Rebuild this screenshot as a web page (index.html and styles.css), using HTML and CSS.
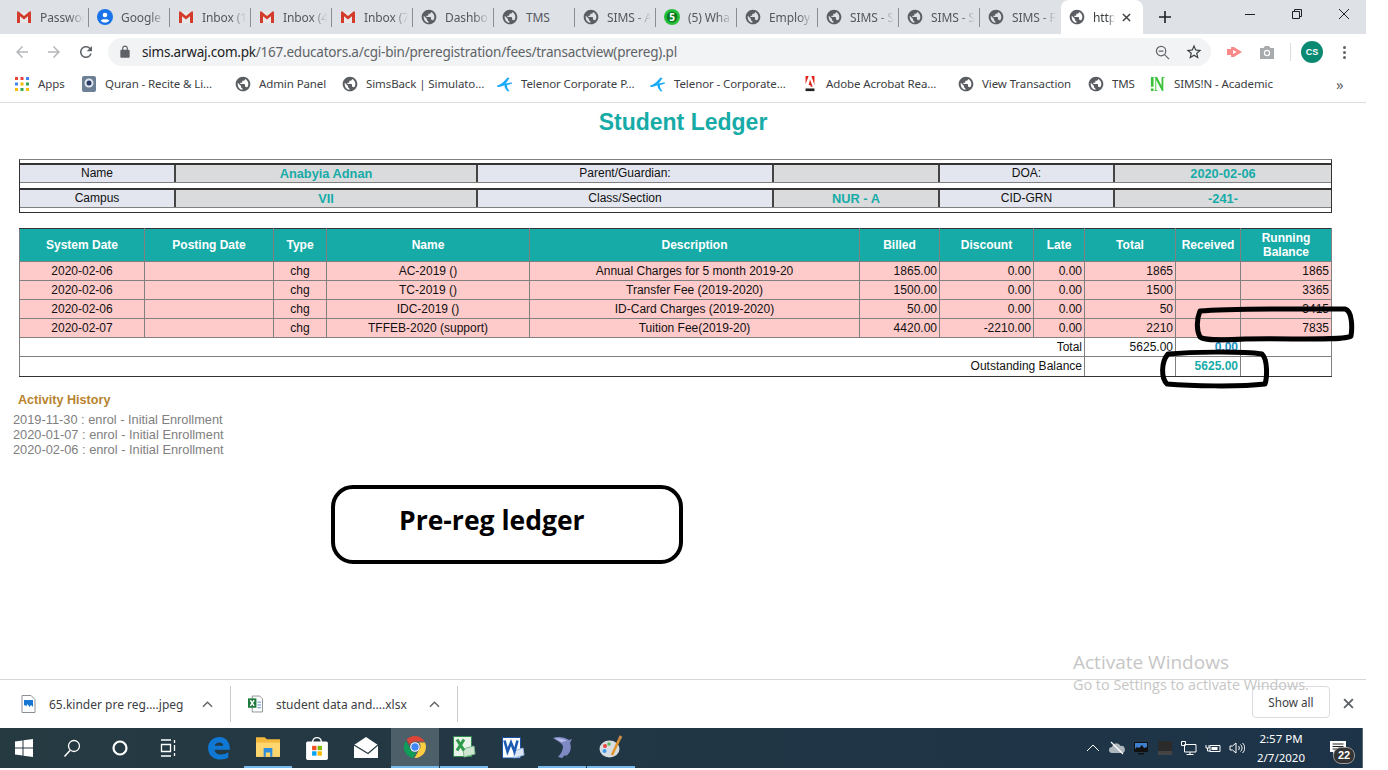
FILE: index.html
```html
<!DOCTYPE html>
<html lang="en">
<head>
    <meta charset="UTF-8">
    <title>Student Ledger</title>
    <link rel="stylesheet" href="styles.css">
</head>
<body>

<svg class="defs" width="0" height="0">
    <symbol id="globe" viewBox="0 0 24 24"><path fill="#5a5e63" d="M12 1C5.900 1 1 5.900 1 12s4.900 11 11 11 11-4.900 11-11S18.100 1 12 1zm-1 19.900c-4-.5-7-3.900-7-8.900 0-.6.1-1.200.2-1.800L9 15v1c0 1.100.9 2 2 2v2.900zm6.900-3.500c-.3-.8-1-1.400-1.900-1.400h-1v-3c0-.6-.4-1-1-1H8v-2h2c.6 0 1-.4 1-1V7h2c1.100 0 2-.9 2-2v-.4c2.900 1.200 5 4 5 7.400 0 2.100-.8 4-2.100 5.400z"/></symbol>
    <symbol id="gmail" viewBox="0 0 16 16"><path fill="#e8e8e8" d="M2 3h12v11H2z"/><path fill="#d33b2c" d="M1 2.500h1.500L8 7l5.500-4.500H15V14h-3V7.200L8 10.400 4 7.200V14H1z"/></symbol>
    <symbol id="telenor" viewBox="0 0 16 16"><path fill="#19aaf8" d="M0 9.500C3 9 7 6 10.500 1.500l2 .5C10.500 5 9.500 6.500 8.500 7.500c2-.2 4-.4 6-1.200l.5 1.200c-2 .8-3.500 1.200-5 1.400-.2 2 .5 4 2.500 6L11 15.500C8.500 13.500 7.500 11.500 7.500 9.200 5 10.200 2.500 11 .5 11z"/></symbol>
</svg>

<div class="screen">

    <div class="tabstrip">
        <div class="tab"><svg class="ico"><use href="#gmail"/></svg><span class="tab-text">Passwor</span></div>
        <div class="tab"><svg class="ico" viewBox="0 0 16 16"><circle cx="8" cy="8" r="8" fill="#1a73e8"/><circle cx="8" cy="6" r="2.300" fill="#fff"/><path fill="#fff" d="M3.800 11.500c1-1.700 7.400-1.700 8.400 0-1 1.400-2.400 2-4.200 2s-3.200-.6-4.200-2z"/></svg><span class="tab-text">Google</span></div>
        <div class="tab"><svg class="ico"><use href="#gmail"/></svg><span class="tab-text">Inbox (1</span></div>
        <div class="tab"><svg class="ico"><use href="#gmail"/></svg><span class="tab-text">Inbox (4</span></div>
        <div class="tab"><svg class="ico"><use href="#gmail"/></svg><span class="tab-text">Inbox (7</span></div>
        <div class="tab"><svg class="ico"><use href="#globe"/></svg><span class="tab-text">Dashbo</span></div>
        <div class="tab"><svg class="ico"><use href="#globe"/></svg><span class="tab-text tab-plain">TMS</span></div>
        <div class="tab"><svg class="ico"><use href="#globe"/></svg><span class="tab-text">SIMS - A</span></div>
        <div class="tab"><svg class="ico" viewBox="0 0 16 16"><circle cx="8" cy="8" r="8" fill="#25c03a"/><circle cx="8" cy="8" r="5.500" fill="#0d7a24"/><text x="8" y="11.500" class="wa-num">5</text></svg><span class="tab-text">(5) Wha</span></div>
        <div class="tab"><svg class="ico"><use href="#globe"/></svg><span class="tab-text">Employ</span></div>
        <div class="tab"><svg class="ico"><use href="#globe"/></svg><span class="tab-text">SIMS - S</span></div>
        <div class="tab"><svg class="ico"><use href="#globe"/></svg><span class="tab-text">SIMS - S</span></div>
        <div class="tab tab-last"><svg class="ico"><use href="#globe"/></svg><span class="tab-text">SIMS - F</span></div>
        <div class="tab tab-active">
            <svg class="ico"><use href="#globe"/></svg><span class="tab-text">http</span>
            <svg class="tab-close" viewBox="0 0 10 10"><path d="M1 1l8 8M9 1l-8 8"/></svg>
        </div>
        <svg class="new-tab" viewBox="0 0 12 12"><path d="M6 0v12M0 6h12"/></svg>
        <div class="win-controls">
            <svg viewBox="0 0 12 12"><path d="M1 6.500h10"/></svg>
            <svg viewBox="0 0 12 12"><path d="M1.500 3.500h7v7h-7zM3.500 3.500v-2h7v7h-2"/></svg>
            <svg viewBox="0 0 12 12"><path d="M1 1l10 10M11 1L1 11"/></svg>
        </div>
    </div>

    <div class="toolbar">
        <svg class="nav-ico nav-off" viewBox="0 0 24 24"><path d="M20 11H7.800l5.600-5.600L12 4l-8 8 8 8 1.400-1.400L7.800 13H20z"/></svg>
        <svg class="nav-ico nav-off" viewBox="0 0 24 24"><path d="M4 11h12.200l-5.600-5.600L12 4l8 8-8 8-1.400-1.400 5.600-5.600H4z"/></svg>
        <svg class="nav-ico" viewBox="0 0 24 24"><path d="M17.650 6.350C16.200 4.900 14.210 4 12 4c-4.420 0-7.990 3.580-7.990 8s3.570 8 7.990 8c3.730 0 6.840-2.550 7.730-6h-2.080c-.82 2.330-3.040 4-5.650 4-3.310 0-6-2.690-6-6s2.690-6 6-6c1.660 0 3.140.69 4.220 1.780L13 11h7V4z"/></svg>
        <div class="omnibox">
            <svg class="lock" viewBox="0 0 24 24"><path d="M18 8h-1V6c0-2.760-2.240-5-5-5S7 3.240 7 6v2H6c-1.100 0-2 .9-2 2v10c0 1.100.9 2 2 2h12c1.100 0 2-.9 2-2V10c0-1.100-.9-2-2-2zM9 6c0-1.660 1.340-3 3-3s3 1.340 3 3v2H9z"/></svg>
            <span class="url"><b>sims.arwaj.com.pk</b>/167.educators.a/cgi-bin/preregistration/fees/transactview(prereg).pl</span>
            <svg class="omni-ico" viewBox="0 0 16 16"><circle cx="6.500" cy="6.500" r="5"/><path d="M10.200 10.200L15 15M4 6.500h5"/></svg>
            <svg class="omni-star" viewBox="0 0 24 24"><path d="M22 9.240l-7.190-.62L12 2 9.190 8.630 2 9.240l5.460 4.730L5.820 21 12 17.270 18.180 21l-1.630-7.030L22 9.240zM12 15.400l-3.760 2.270 1-4.280-3.320-2.880 4.380-.38L12 6.100l1.710 4.040 4.380.38-3.320 2.880 1 4.280L12 15.400z"/></svg>
        </div>
        <svg class="ext-ico" viewBox="0 0 16 16"><path fill="#f98a8a" d="M0 5h4V3h3l8 5-8 5H4v-2H0z"/><path fill="#fff" d="M6 6v4l3.500-2z"/></svg>
        <svg class="ext-ico" viewBox="0 0 16 16"><path fill="#a8abae" d="M1 4h3.500L6 2h4l1.500 2H15v11H1z"/><circle cx="8" cy="9" r="3.200" fill="#fff"/><circle cx="8" cy="9" r="2" fill="#a8abae"/></svg>
        <span class="tool-sep"></span>
        <span class="avatar">CS</span>
        <span class="kebab"><i></i><i></i><i></i></span>
    </div>

    <div class="bookmarks">
        <div class="bm">
            <svg class="apps" viewBox="0 0 14 14">
                <path fill="#ea4335" d="M0 0h3v3H0zM5.500 0h3v3h-3z"/><path fill="#4285f4" d="M11 0h3v3h-3zM0 5.500h3v3H0z"/>
                <path fill="#fbbc05" d="M5.500 5.500h3v3h-3zM0 11h3v3H0z"/><path fill="#34a853" d="M11 5.500h3v3h-3zM5.500 11h3v3h-3z"/><path fill="#fbbc05" d="M11 11h3v3h-3z"/>
            </svg>Apps
        </div>
        <div class="bm"><svg class="ico" viewBox="0 0 16 16"><rect x="1" y="0" width="14" height="16" rx="2" fill="#6d7f95"/><circle cx="8" cy="7" r="4.500" fill="#dfe6ee"/><circle cx="8" cy="7" r="2.500" fill="#2a3b68"/></svg>Quran - Recite &amp; Li...</div>
        <div class="bm"><svg class="ico"><use href="#globe"/></svg>Admin Panel</div>
        <div class="bm"><svg class="ico"><use href="#globe"/></svg>SimsBack | Simulato...</div>
        <div class="bm"><svg class="ico"><use href="#telenor"/></svg>Telenor Corporate P...</div>
        <div class="bm"><svg class="ico"><use href="#telenor"/></svg>Telenor - Corporate...</div>
        <div class="bm"><svg class="ico" viewBox="0 0 16 18"><path fill="#e2231a" d="M3 0h3.500L3 9H3zM9.500 0H13v10zM8 4l3 8H9l-1-2H6.500z"/><path fill="#222" d="M3 14h10v3H3z"/></svg>Adobe Acrobat Rea...</div>
        <div class="bm"><svg class="ico"><use href="#globe"/></svg>View Transaction</div>
        <div class="bm"><svg class="ico"><use href="#globe"/></svg>TMS</div>
        <div class="bm"><svg class="ico" viewBox="0 0 16 18"><path fill="#3cc13b" d="M0 1h3v11H0zM0 14h3v3H0zM4 1h3l5 10V1h3.500v1H14v15h-1.500L6 4.500V16h1.500v1H4v-1h1V2H4z"/></svg>SIMS!N - Academic</div>
        <div class="bm-more">&raquo;</div>
    </div>

    <div class="page">
        <h1 class="title">Student Ledger</h1>

        <div class="info">
            <div class="info-row">
                <div class="lbl">Name</div><div class="val">Anabyia Adnan</div>
                <div class="lbl">Parent/Guardian:</div><div class="val"></div>
                <div class="lbl">DOA:</div><div class="val">2020-02-06</div>
            </div>
            <div class="info-row">
                <div class="lbl">Campus</div><div class="val">VII</div>
                <div class="lbl">Class/Section</div><div class="val">NUR - A</div>
                <div class="lbl">CID-GRN</div><div class="val">-241-</div>
            </div>
        </div>

        <table class="ledger">
            <colgroup>
                <col class="w125"><col class="w129"><col class="w53"><col class="w203"><col class="w330"><col class="w80">
                <col class="w94"><col class="w51"><col class="w91"><col class="w65"><col class="w91">
            </colgroup>
            <tr>
                <th>System Date</th><th>Posting Date</th><th>Type</th><th>Name</th><th>Description</th><th>Billed</th>
                <th>Discount</th><th>Late</th><th>Total</th><th>Received</th><th>Running<br>Balance</th>
            </tr>
            <tr class="chg">
                <td>2020-02-06</td><td></td><td>chg</td><td>AC-2019 ()</td><td>Annual Charges for 5 month 2019-20</td>
                <td class="num">1865.00</td><td class="num">0.00</td><td class="num">0.00</td><td class="num">1865</td><td></td><td class="num">1865</td>
            </tr>
            <tr class="chg">
                <td>2020-02-06</td><td></td><td>chg</td><td>TC-2019 ()</td><td>Transfer Fee (2019-2020)</td>
                <td class="num">1500.00</td><td class="num">0.00</td><td class="num">0.00</td><td class="num">1500</td><td></td><td class="num">3365</td>
            </tr>
            <tr class="chg">
                <td>2020-02-06</td><td></td><td>chg</td><td>IDC-2019 ()</td><td>ID-Card Charges (2019-2020)</td>
                <td class="num">50.00</td><td class="num">0.00</td><td class="num">0.00</td><td class="num">50</td><td></td><td class="num">3415</td>
            </tr>
            <tr class="chg">
                <td>2020-02-07</td><td></td><td>chg</td><td>TFFEB-2020 (support)</td><td>Tuition Fee(2019-20)</td>
                <td class="num">4420.00</td><td class="num">-2210.00</td><td class="num">0.00</td><td class="num">2210</td><td></td><td class="num">7835</td>
            </tr>
            <tr>
                <td class="num" colspan="8">Total</td><td class="num">5625.00</td><td class="num paid">0.00</td><td></td>
            </tr>
            <tr>
                <td class="num" colspan="8">Outstanding Balance</td><td></td><td class="num owed">5625.00</td><td></td>
            </tr>
        </table>

        <h3 class="activity-head">Activity History</h3>
        <div class="activity">
            <div>2019-11-30 : enrol - Initial Enrollment</div>
            <div>2020-01-07 : enrol - Initial Enrollment</div>
            <div>2020-02-06 : enrol - Initial Enrollment</div>
        </div>

        <div class="note">Pre-reg ledger</div>
        <svg class="marks" viewBox="0 0 1366 576">
            <path d="M1200 208C1230 205 1300 206 1345 206C1353 208 1352 227 1351 233C1345 238 1290 235 1245 236C1225 237 1205 238 1200 234C1196 227 1197 215 1200 208Z"/>
            <path d="M1168 251C1190 249 1240 248 1262 251C1268 257 1267 275 1265 281C1240 284 1190 283 1167 281C1161 275 1161 259 1168 251Z"/>
        </svg>
    </div>

    <div class="downloads">
        <div class="dl">
            <svg class="dl-ico" viewBox="0 0 14 18"><path fill="#fff" stroke="#8a8f96" d="M.5.500h9l4 4v13H.5z"/><path fill="#1577d2" d="M2.500 5h9v7l-2-2-1.500 2-2-3-1 2-2.500-1z"/></svg>
            <span class="dl-name">65.kinder pre reg....jpeg</span>
            <svg class="chev" viewBox="0 0 12 8"><path d="M1 7l5-5 5 5"/></svg>
        </div>
        <div class="dl">
            <svg class="dl-ico" viewBox="0 0 16 18"><path fill="#fff" stroke="#8a8f96" d="M4.500.500h8l3 3v14h-11z"/><path fill="#1e7a3c" d="M0 3h9v10H0z"/><path stroke="#fff" stroke-width="1.500" d="M2.500 5l4 6M6.500 5l-4 6"/><path stroke="#5b8fd0" d="M10 7h4M10 10h4M10 13h4"/></svg>
            <span class="dl-name">student data and....xlsx</span>
            <svg class="chev" viewBox="0 0 12 8"><path d="M1 7l5-5 5 5"/></svg>
        </div>
        <button class="show-all">Show all</button>
        <svg class="dl-close" viewBox="0 0 10 10"><path d="M1 1l8 8M9 1l-8 8"/></svg>
    </div>

    <div class="taskbar">
        <div class="task-group">
            <div class="cell"><svg class="t-ico" viewBox="0 0 18 18"><path fill="#fff" d="M0 2.500l7.500-1v7H0zM8.500 1.300L18 0v8.500H8.500zM0 9.500h7.500v7L0 15.500zM8.500 9.500H18V18l-9.500-1.300z"/></svg></div>
            <div class="cell"><svg class="t-ico" viewBox="0 0 18 18"><circle cx="11" cy="7" r="5.500" fill="none" stroke="#fff" stroke-width="1.300"/><path stroke="#fff" stroke-width="1.500" d="M7 11.500L1.500 17.500"/></svg></div>
            <div class="cell"><svg class="t-ico" viewBox="0 0 18 18"><circle cx="9" cy="9" r="6.500" fill="none" stroke="#fff" stroke-width="2.200"/></svg></div>
            <div class="cell"><svg class="t-ico" viewBox="0 0 18 18"><path fill="none" stroke="#fff" stroke-width="1.300" d="M2 1h10M2 17h10M2.500 5.500h9v7h-9zM15.500 1v3M15.500 6v6M15.500 14v3"/></svg></div>
        </div>
        <div class="task-group task-apps">
            <div class="cell"><svg class="t-ico t-big" viewBox="0 0 22 22"><path fill="#0f78d4" d="M1 11C1 5 6 1 11.500 1 17.500 1 21 5.500 21 12.500H7c.5 5 7.500 6 12.500 2.500v5c-7 3.500-18.500 1.500-18.500-9zM7 9h8c-.2-4-7-4-8 0z"/></svg></div>
            <div class="cell open"><svg class="t-ico t-big" viewBox="0 0 22 22"><path fill="#f4b83f" d="M0 2h8l2 2h12v16H0z"/><path fill="#ffd66e" d="M0 7h22v13H0z"/><path fill="#2c8de0" d="M7 12h8v8h-2v-4H9v4H7z"/></svg></div>
            <div class="cell"><svg class="t-ico t-big" viewBox="0 0 22 22"><path fill="none" stroke="#fff" stroke-width="1.300" d="M7 6c0-6 8-6 8 0"/><rect x="1" y="5" width="20" height="17" rx="1.500" fill="#fff"/><path fill="#f25022" d="M6.500 9h4v4h-4z"/><path fill="#7fba00" d="M11.500 9h4v4h-4z"/><path fill="#00a4ef" d="M6.500 14h4v4h-4z"/><path fill="#ffb900" d="M11.500 14h4v4h-4z"/></svg></div>
            <div class="cell"><svg class="t-ico t-big" viewBox="0 0 24 22"><path fill="#fff" d="M0 8L12 0l12 8v13H0z"/><path fill="none" stroke="#263a42" stroke-width="1.300" d="M0 8l14 8.500L24 8"/></svg></div>
            <div class="cell open active"><svg class="t-ico t-big" viewBox="0 0 24 24"><path fill="#db4437" d="M12 1a11 11 0 0 1 9.500 5.500H12a5.500 5.500 0 0 0-5.200 3.600L3.600 4.500A11 11 0 0 1 12 1z"/><path fill="#0f9d58" d="M2.800 5.800l4.900 8.900a5.500 5.500 0 0 0 5.700 2.700L10.200 23A11 11 0 0 1 2.800 5.800z"/><path fill="#ffcd40" d="M22 7.500A11 11 0 0 1 11.500 23l4.800-8.400a5.500 5.500 0 0 0-.4-7.100z"/><circle cx="12" cy="12" r="4.800" fill="#fff"/><circle cx="12" cy="12" r="3.700" fill="#4285f4"/></svg></div>
            <div class="cell open"><svg class="t-ico t-big" viewBox="0 0 24 24"><path fill="#e9f3ea" stroke="#2f8a4c" d="M1.500 1.500h18v20h-18z"/><path fill="#cfe6d2" stroke="#7fb98c" d="M11 14l11-3 1 8-11 3z"/><path fill="none" stroke="#2f9a4a" stroke-width="3" d="M5 4.500l7 11M12 4.500l-7 11"/></svg></div>
            <div class="cell"><svg class="t-ico t-big" viewBox="0 0 24 24"><path fill="#fff" stroke="#1d4fa5" d="M1.500 1.500h18v20.500h-18z"/><path fill="#dbe6f5" stroke="#9db7dc" d="M13 15l9-3 1 7-10 3z"/><path fill="none" stroke="#1d5bb5" stroke-width="2.600" d="M3.500 4.500l3 11 3.500-9 3.500 9 3-11"/></svg></div>
            <div class="cell open"><svg class="t-ico t-big" viewBox="0 0 24 24"><path fill="#7f8ac4" d="M3 3c5-2 12-1 16 2l3-1-2 4c2 5 0 11-4 13l-1-1-3 3-4-1c3-3 5-7 5-11-2-4-6-5-10-8z"/><path fill="#b6bce6" d="M5 3.500c4-.5 9 .5 12 2.500-2 0-4 .5-5.500 1.500C10 6 7.500 5 5 3.500z"/></svg></div>
            <div class="cell open"><svg class="t-ico t-big" viewBox="0 0 24 24"><ellipse cx="10.500" cy="14" rx="10" ry="8.500" fill="#d7dde3"/><circle cx="6" cy="11" r="2" fill="#e8453c"/><circle cx="5.500" cy="16" r="2" fill="#3f9be8"/><circle cx="10" cy="9" r="1.800" fill="#5cb85c"/><path stroke="#e3942b" stroke-width="2.600" d="M13 20l7-15"/><path stroke="#c98a4b" stroke-width="3" d="M20 5l2-4"/></svg></div>
        </div>
        <div class="tray">
            <svg class="tray-ico" viewBox="0 0 14 14"><path fill="none" stroke="#fff" d="M1 10l6-6 6 6"/></svg>
            <svg class="tray-ico" viewBox="0 0 16 14"><path fill="#aeb6bd" d="M3 12a3 3 0 0 1 0-6 4.500 4.500 0 0 1 8.500-1A3.500 3.500 0 0 1 13 12z"/><path stroke="#fff" stroke-width="1.200" d="M2 1l12 12"/></svg>
            <svg class="tray-ico" viewBox="0 0 16 14"><path fill="#111" d="M1 1h14v10H1z"/><path fill="#3f7fd0" d="M2 2h12v4l-3 1-2-3-3 3-2-1-2 2z"/><path fill="#111" d="M5 12h6v1.500H5z"/></svg>
            <svg class="tray-ico" viewBox="0 0 16 14"><path fill="#2b2b2b" d="M1 0h14v14H1z"/><path fill="#444" d="M1 10h14v4H1z"/></svg>
            <svg class="tray-ico" viewBox="0 0 16 14"><path fill="none" stroke="#fff" d="M3.500 3.500h11.500v7.500H3.500zM9 11v2M5.500 13.500h7M.5 .5h4v4h-4z"/></svg>
            <svg class="tray-ico" viewBox="0 0 16 14"><path fill="none" stroke="#fff" d="M5 4.500h10v6H5zM1 4v3h3V4M2.500 7v3H5"/><path fill="#fff" d="M6.500 6h6v3h-6z"/></svg>
            <svg class="tray-ico" viewBox="0 0 16 14"><path fill="none" stroke="#fff" d="M1 5v4h2.500L7 12V2L3.500 5zM9.500 5c1 1 1 3 0 4M11.500 3.500c2 2 2 5 0 7M13.500 2c3 3 3 7 0 10"/></svg>
        </div>
        <div class="clock"><div>2:57 PM</div><div>2/7/2020</div></div>
        <div class="notify">
            <svg viewBox="0 0 16 14"><path fill="#fff" d="M0 0h16v11H6l-3 3v-3H0z"/><path stroke="#222" d="M2.500 3h11M2.500 5.500h11M2.500 8h11"/></svg>
            <span class="notify-count">22</span>
        </div>
    </div>

    <div class="watermark">
        <div class="wm-big">Activate Windows</div>
        <div class="wm-small">Go to Settings to activate Windows.</div>
    </div>
</div>

</body>
</html>
```

FILE: styles.css
```css
body {
    margin: 0;
    height: 770px;
    overflow: hidden;
    background-color: white;
    font-family: "Liberation Sans", Arial, sans-serif;
}

.defs {
    display: block;
}

.screen {
    width: 1366px;
    height: 768px;
    display: flex;
    flex-direction: column;
    position: relative;
}

.ico {
    width: 16px;
    height: 16px;
    flex: none;
}

/* browser tabs */
.tabstrip {
    height: 34px;
    flex: none;
    display: flex;
    align-items: center;
    padding-left: 8px;
    background-color: #dee1e6;
    font-family: "Noto Sans", sans-serif;
    font-size: 12px;
    letter-spacing: -0.1px;
    color: #55585d;
}

.tab {
    width: 81px;
    height: 34px;
    flex: none;
    display: flex;
    align-items: center;
    gap: 8px;
    padding-left: 8px;
    box-sizing: border-box;
}

.tab::after {
    content: "";
    width: 1px;
    height: 19px;
    flex: none;
    margin-left: -8px;
    background-color: #8b8e92;
}

.tab-last::after {
    background-color: transparent;
}

.tab-text {
    flex: 1;
    min-width: 0;
    white-space: nowrap;
    -webkit-mask-image: linear-gradient(to right, black 60%, transparent 92%);
    mask-image: linear-gradient(to right, black 60%, transparent 92%);
}

.tab-plain {
    -webkit-mask-image: none;
    mask-image: none;
}

.tab-active {
    width: 82px;
    background-color: white;
    border-radius: 8px 8px 0 0;
    color: #3c4043;
}

.tab-active::after {
    display: none;
}

.tab-active .tab-text {
    flex: none;
    width: 24px;
}

.tab-close {
    width: 9px;
    height: 9px;
    flex: none;
    margin-left: -3px;
    fill: none;
    stroke: #3c4043;
    stroke-width: 1.6;
}

.wa-num {
    font-size: 10px;
    font-weight: bold;
    fill: #fff;
    text-anchor: middle;
}

.new-tab {
    width: 12px;
    height: 12px;
    margin-left: 16px;
    fill: none;
    stroke: #202124;
    stroke-width: 1.6;
}

.win-controls {
    margin-left: auto;
    display: flex;
    gap: 35px;
    padding: 0 16px 6px 0;
}

.win-controls svg {
    width: 12px;
    height: 12px;
    fill: none;
    stroke: #202124;
}

/* address bar */
.toolbar {
    height: 36px;
    flex: none;
    display: flex;
    align-items: center;
    padding-left: 13px;
    box-sizing: border-box;
}

.nav-ico {
    width: 18px;
    height: 18px;
    margin-right: 14px;
    fill: #5f6368;
}

.nav-off {
    fill: #b4b7ba;
}

.omnibox {
    width: 1103px;
    height: 28px;
    display: flex;
    align-items: center;
    margin-left: -1px;
    margin-right: 16px;
    padding-left: 10px;
    box-sizing: border-box;
    border-radius: 14px;
    background-color: #f1f3f4;
}

.lock {
    width: 14px;
    height: 14px;
    fill: #5f6368;
}

.url {
    margin-left: 10px;
    margin-top: -1px;
    flex: 1;
    font-family: "Noto Sans", sans-serif;
    font-size: 13.500px;
    letter-spacing: -0.22px;
    color: #5f6368;
    white-space: nowrap;
}

.url b {
    font-weight: normal;
    color: #202124;
}

.omni-ico {
    width: 15px;
    height: 15px;
    margin-right: 15px;
    fill: none;
    stroke: #5f6368;
    stroke-width: 1.300;
}

.omni-star {
    width: 18px;
    height: 18px;
    margin-right: 8px;
    fill: #3c4043;
}

.ext-ico {
    width: 16px;
    height: 16px;
    margin-right: 16px;
}

.tool-sep {
    width: 1px;
    height: 18px;
    background-color: #dadce0;
    margin: 0 10px 0 -1px;
}

.avatar {
    width: 22px;
    height: 22px;
    border-radius: 50%;
    background-color: #0b8a73;
    color: white;
    font-size: 9px;
    font-weight: bold;
    line-height: 22px;
    text-align: center;
}

.kebab {
    display: flex;
    flex-direction: column;
    gap: 2px;
    margin-left: 20px;
}

.kebab i {
    width: 3px;
    height: 3px;
    border-radius: 50%;
    background-color: #5f6368;
}

/* bookmarks bar */
.bookmarks {
    height: 33px;
    flex: none;
    display: grid;
    grid-template-columns: 66px 154px 107px 155px 153px 152px 156px 130px 62px 186px auto;
    align-items: center;
    padding: 0 0 5px 15px;
    box-sizing: border-box;
    border-bottom: 1px solid #dadce0;
    font-family: "Noto Sans", sans-serif;
    font-size: 11.500px;
    letter-spacing: -0.1px;
    color: #3c4043;
}

.bm {
    display: flex;
    align-items: center;
    gap: 8px;
    white-space: nowrap;
}

.apps {
    width: 14px;
    height: 14px;
    margin-right: 1px;
}

.bm-more {
    font-size: 15px;
    color: #5f6368;
}

/* page content */
.page {
    flex: 1;
    position: relative;
    font-size: 12px;
}

.title {
    margin: 0;
    padding-top: 5px;
    font-size: 23px;
    line-height: 28px;
    text-align: center;
    color: #17aba8;
}

.info {
    width: 1313px;
    height: 54px;
    box-sizing: border-box;
    margin: 23px 0 0 19px;
    padding-top: 3px;
    border: 1px solid #333;
    border-top-color: #808080;
}

.info-row {
    display: grid;
    grid-template-columns: 156px 302px 296px 166px 175px 1fr;
    height: 20px;
    box-sizing: border-box;
    margin-bottom: 5px;
    border-top: 2px solid #333;
    border-bottom: 1px solid #808080;
    line-height: 17px;
    text-align: center;
}

.lbl,
.val {
    border-right: 2px solid #444;
}

.lbl {
    background-color: #e3e6ef;
    color: #111;
}

.val {
    background-color: #dadbdc;
    color: #17aba8;
    font-size: 12.800px;
    font-weight: bold;
}

.val:last-child {
    border-right: none;
}

.ledger {
    width: 1313px;
    margin: 15px 0 0 19px;
    border-collapse: collapse;
    table-layout: fixed;
    border: 1px solid #333;
}

.w125 { width: 125px; }
.w129 { width: 129px; }
.w53 { width: 53px; }
.w203 { width: 203px; }
.w330 { width: 330px; }
.w80 { width: 80px; }
.w94 { width: 94px; }
.w51 { width: 51px; }
.w91 { width: 91px; }
.w65 { width: 65px; }

.ledger th {
    height: 32px;
    padding: 0;
    border: 1px solid #808080;
    border-top-color: #333;
    background-color: #17aba8;
    color: white;
    font-size: 12px;
    line-height: 14px;
}

.ledger td {
    height: 18px;
    padding: 0 2px;
    border: 1px solid #808080;
    text-align: center;
    line-height: 14px;
    color: #111;
}

.ledger tr:last-child td {
    height: 17px;
    padding-bottom: 2px;
    border-bottom-color: #333;
}

.ledger .chg td {
    background-color: #ffcaca;
}

.ledger .num {
    text-align: right;
}

.ledger .paid {
    font-weight: bold;
    color: #1a8fc0;
}

.ledger .owed {
    font-weight: bold;
    color: #17aba8;
}

.activity-head {
    margin: 16px 0 0 18px;
    font-size: 12.600px;
    line-height: 15px;
    color: #b8832e;
}

.activity {
    margin: 4px 0 0 13px;
    font-size: 12.800px;
    line-height: 15px;
    color: #808080;
}

/* drawn on top of the screenshot */
.note {
    position: absolute;
    left: 331px;
    top: 382px;
    width: 352px;
    height: 79px;
    box-sizing: border-box;
    padding: 13px 0 0 64px;
    border: 4px solid black;
    border-radius: 22px;
    font-family: "Open Sans", sans-serif;
    font-size: 26.500px;
    font-weight: bold;
    color: black;
}

.marks {
    position: absolute;
    left: 0;
    top: 0;
    width: 1366px;
    height: 576px;
    fill: none;
    stroke: black;
    stroke-width: 5;
    stroke-linejoin: round;
    pointer-events: none;
}

/* download shelf */
.downloads {
    height: 49px;
    flex: none;
    display: flex;
    align-items: center;
    box-sizing: border-box;
    border-top: 1px solid #d4d6d8;
    font-family: "Noto Sans", sans-serif;
    font-size: 12px;
    color: #3c4043;
}

.dl {
    height: 36px;
    display: flex;
    align-items: center;
    padding-left: 21px;
    box-sizing: border-box;
    border-right: 1px solid #c8cacc;
}

.dl:first-child {
    width: 231px;
}

.dl + .dl {
    width: 227px;
    padding-left: 17px;
}

.dl-ico {
    width: 15px;
    height: 18px;
    margin-right: 13px;
}

.dl-name {
    flex: 1;
    white-space: nowrap;
}

.chev {
    width: 11px;
    height: 8px;
    margin-right: 17px;
    fill: none;
    stroke: #5f6368;
    stroke-width: 1.500;
}

.show-all {
    width: 78px;
    height: 32px;
    margin: 0 0 4px auto;
    padding: 0;
    border: 1px solid #dadce0;
    border-radius: 4px;
    background-color: white;
    font-family: "Noto Sans", sans-serif;
    font-size: 11.700px;
    color: #3c4043;
}

.dl-close {
    width: 11px;
    height: 11px;
    margin: 0 12px 2px 13px;
    fill: none;
    stroke: #5f6368;
    stroke-width: 1.700;
}

/* windows taskbar */
.taskbar {
    height: 40px;
    flex: none;
    display: flex;
    background: linear-gradient(to right, #263a42, #1d3348);
    border-right: 1px solid #5a6b78;
    box-sizing: border-box;
    width: 1363px;
}

.task-group {
    display: flex;
}

.task-apps {
    gap: 1px;
    margin-left: 3px;
}

.cell {
    width: 48px;
    height: 40px;
    display: flex;
    align-items: center;
    justify-content: center;
    box-sizing: border-box;
}

.open {
    border-bottom: 2px solid #76b9ed;
}

.active {
    background-color: #4d5f68;
}

.t-ico {
    width: 18px;
    height: 18px;
}

.t-big {
    width: 24px;
    height: 24px;
}

.tray {
    margin-left: auto;
    display: flex;
    align-items: center;
}

.tray-ico {
    width: 16px;
    height: 14px;
    margin: 0 4px;
}

.clock {
    width: 64px;
    padding-top: 1px;
    font-family: "Noto Sans", sans-serif;
    font-size: 11.500px;
    line-height: 19px;
    text-align: center;
    color: white;
}

.notify {
    width: 49px;
    display: flex;
    align-items: center;
    justify-content: center;
    position: relative;
}

.notify svg {
    width: 16px;
    height: 14px;
}

.notify-count {
    position: absolute;
    left: 20px;
    top: 19px;
    width: 20px;
    height: 15px;
    border-radius: 8px;
    border: 1px solid #999;
    background-color: #333;
    color: white;
    font-size: 11px;
    font-weight: bold;
    line-height: 15px;
    text-align: center;
}

/* activation watermark lies over the page */
.watermark {
    position: absolute;
    left: 1073px;
    top: 650px;
    font-family: "Open Sans", sans-serif;
    color: #c6c6c6;
    white-space: nowrap;
    pointer-events: none;
}

.wm-big {
    font-size: 19px;
    line-height: 25px;
}

.wm-small {
    font-size: 14.400px;
    line-height: 20px;
}
```
